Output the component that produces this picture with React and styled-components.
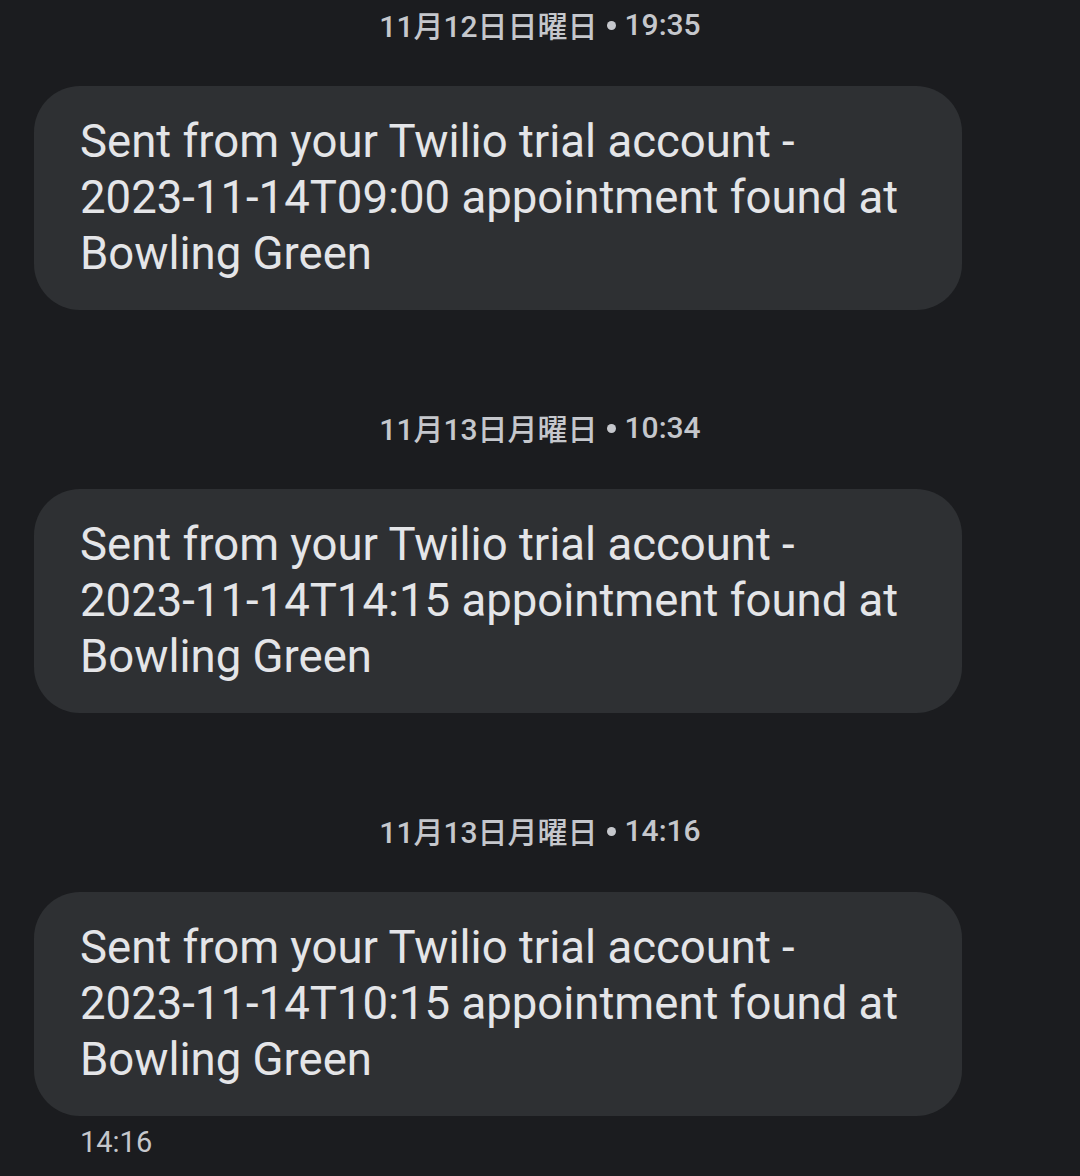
import React from "react";
import styled, { createGlobalStyle } from "styled-components";

const Global = createGlobalStyle`
  html, body { margin: 0; padding: 0; background: #1b1c1f; }
  body { font-family: Roboto, "Noto Sans CJK JP", sans-serif; }
`;

const Page = styled.div`
  width: 1080px;
  height: 1176px;
  background: #1b1c1f;
  display: flex;
  flex-direction: column;
  overflow: hidden;
`;

const Group = styled.section`
  display: flex;
  flex-direction: column;
  margin-bottom: ${(p) => p.$gap || 0}px;
`;

const Stamp = styled.div`
  height: 48px;
  display: flex;
  align-items: center;
  justify-content: center;
  color: #c5c7cc;
  font-family: Roboto, "Noto Sans CJK JP", sans-serif;
  font-weight: 500;
  font-size: 30px;
  margin-bottom: 38px;
`;

const Dot = styled.span`
  display: inline-block;
  width: 9px;
  height: 9px;
  border-radius: 50%;
  background: #c5c7cc;
  margin: 2px 9px 0 9px;
`;

const Bubble = styled.div`
  margin-left: 34px;
  width: 928px;
  box-sizing: border-box;
  padding: 28px 46px 28px 46px;
  background: #2e3033;
  border-radius: 46px;
  color: #e4e5e8;
  font-family: Roboto, sans-serif;
  font-size: 45.5px;
  line-height: 56px;
`;

const Time = styled.div`
  margin-left: 80px;
  margin-top: 6px;
  color: #c5c7cc;
  font-family: Roboto, sans-serif;
  font-size: 29px;
  line-height: 40px;
`;

const messages = [
  { day: "11月12日日曜日", at: "19:35", time: "2023-11-14T09:00" },
  { day: "11月13日月曜日", at: "10:34", time: "2023-11-14T14:15" },
  { day: "11月13日月曜日", at: "14:16", time: "2023-11-14T10:15" },
];

export default function App() {
  return (
    <>
      <Global />
      <Page>
        {messages.map((m, i) => (
          <Group key={i} $gap={i < messages.length - 1 ? 93 : 0}>
            <Stamp>
              <span>{m.day}</span>
              <Dot aria-label="•" />
              <span>{m.at}</span>
            </Stamp>
            <Bubble>
              Sent from your Twilio trial account -<br />
              {m.time} appointment found at<br />
              Bowling Green
            </Bubble>
          </Group>
        ))}
        <Time>14:16</Time>
      </Page>
    </>
  );
}
